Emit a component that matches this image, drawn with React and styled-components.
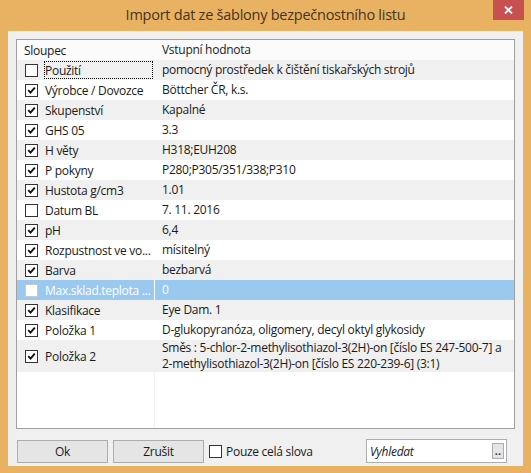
import React from "react";
import styled, { createGlobalStyle } from "styled-components";

const GlobalStyle = createGlobalStyle`
  html, body {
    margin: 0;
    padding: 0;
    background: #e9b263;
  }
  body {
    font-family: "Open Sans", "Noto Sans", sans-serif;
  }
`;

const rows = [
  { label: "Použití", value: "pomocný prostředek k čištění tiskařských strojů", checked: false, focus: true },
  { label: "Výrobce / Dovozce", value: "Böttcher ČR, k.s.", checked: true },
  { label: "Skupenství", value: "Kapalné", checked: true },
  { label: "GHS 05", value: "3.3", checked: true },
  { label: "H věty", value: "H318;EUH208", checked: true },
  { label: "P pokyny", value: "P280;P305/351/338;P310", checked: true },
  { label: "Hustota g/cm3", value: "1.01", checked: true },
  { label: "Datum BL", value: "7. 11. 2016", checked: false },
  { label: "pH", value: "6,4", checked: true },
  { label: "Rozpustnost ve vo...", value: "mísitelný", checked: true },
  { label: "Barva", value: "bezbarvá", checked: true },
  { label: "Max.sklad.teplota ...", value: "0", checked: false, selected: true },
  { label: "Klasifikace", value: "Eye Dam. 1", checked: true },
  { label: "Položka 1", value: "D-glukopyranóza, oligomery, decyl oktyl glykosidy", checked: true },
  {
    label: "Položka 2",
    value: [
      "Směs : 5-chlor-2-methylisothiazol-3(2H)-on [číslo ES 247-500-7] a",
      "2-methylisothiazol-3(2H)-on [číslo ES 220-239-6] (3:1)",
    ],
    checked: true,
  },
];

const Window = styled.div`
  width: 531px;
  height: 473px;
  background: #e9b263;
  display: flex;
  flex-direction: column;
  box-sizing: border-box;
`;

const TitleBar = styled.div`
  height: 31px;
  display: grid;
  grid-template-columns: 1fr auto 1fr;
  align-items: start;
`;

const Title = styled.div`
  grid-column: 2;
  padding-top: 5px;
  font-size: 14.5px;
  letter-spacing: -0.25px;
  color: #45331c;
  white-space: nowrap;
`;

const CloseButton = styled.div`
  grid-column: 3;
  justify-self: end;
  margin-right: 7px;
  width: 31px;
  height: 20px;
  background: #c75050;
  display: flex;
  align-items: center;
  justify-content: center;
`;

const Body = styled.div`
  flex: 1;
  margin: 0 8px 7px 8px;
  background: #f0f0f0;
  padding: 8px 8px 3px 8px;
  display: flex;
  flex-direction: column;
  gap: 10px;
  font-size: 12px;
  letter-spacing: -0.28px;
  color: #1a1a1a;
`;

const List = styled.div`
  height: 390px;
  box-sizing: border-box;
  border: 1px solid #a0a0a0;
  background:
    linear-gradient(to right, transparent 137px, #f0f0f0 137px, #f0f0f0 138px, transparent 138px),
    #ffffff;
  overflow: hidden;
`;

const Row = styled.div`
  display: grid;
  grid-template-columns: 138px 1fr;
  min-height: 20px;
  background: ${(p) => (p.$selected ? "#99c9ef" : p.$striped ? "#f0f0f0" : "#ffffff")};
  color: ${(p) => (p.$selected ? "#ffffff" : "#1a1a1a")};
`;

const HeaderRow = styled(Row)`
  background: #fbfbfb;
`;

const NameCell = styled.div`
  display: flex;
  align-items: center;
  gap: 6px;
  padding-left: ${(p) => (p.$header ? "7px" : "8px")};
  box-sizing: border-box;
  border-right: 1px solid ${(p) => (p.$selected ? "#ffffff" : "transparent")};
  white-space: nowrap;
  overflow: hidden;
`;

const NameText = styled.span`
  flex: 1;
  align-self: stretch;
  display: flex;
  align-items: center;
  padding-left: 1px;
  margin: 1px 1px 1px 0;
  outline: ${(p) => (p.$focus ? "1px dotted #000" : "none")};
  outline-offset: -1px;
`;

const ValueCell = styled.div`
  display: flex;
  flex-direction: column;
  justify-content: center;
  padding-left: 7px;
  line-height: ${(p) => (p.$multi ? "16px" : "20px")};
  min-height: ${(p) => (p.$multi ? "32px" : "20px")};
  white-space: nowrap;
`;

const Box = styled.span`
  width: 13px;
  height: 13px;
  flex: none;
  box-sizing: border-box;
  border: 1px solid ${(p) => (p.$light ? "#c9c9c9" : "#333333")};
  background: #ffffff;
  display: inline-flex;
  align-items: center;
  justify-content: center;
`;

const Footer = styled.div`
  display: flex;
  align-items: center;
  height: 24px;
  padding-left: 1px;
`;

const Button = styled.button`
  width: 91px;
  height: 23px;
  margin-right: 5px;
  border: 1px solid #acacac;
  background: #e5e5e5;
  font-family: inherit;
  font-size: 12px;
  letter-spacing: inherit;
  color: #1a1a1a;
  padding: 0;
`;

const CheckLabel = styled.label`
  display: flex;
  align-items: center;
  gap: 4px;
`;

const Search = styled.div`
  margin-left: auto;
  margin-right: 8px;
  width: 141px;
  height: 24px;
  box-sizing: border-box;
  border: 1px solid #abadb3;
  background: #ffffff;
  display: flex;
  align-items: center;
  padding: 0 2px 0 3px;
`;

const SearchText = styled.span`
  flex: 1;
  font-style: italic;
`;

const DotsButton = styled.span`
  width: 12px;
  height: 16px;
  box-sizing: border-box;
  border: 1px solid #acacac;
  background: #e5e5e5;
  font-size: 11px;
  font-weight: bold;
  line-height: 14px;
  letter-spacing: 0;
  text-align: center;
  color: #333;
`;

const Check = ({ checked, light }) => (
  <Box $light={light}>
    {checked && (
      <svg width="9" height="9" viewBox="0 0 9 9">
        <polyline points="1.2,4.2 3.5,6.6 7.8,1.6" fill="none" stroke="#111" strokeWidth="1.9" />
      </svg>
    )}
  </Box>
);

export default function App() {
  return (
    <>
      <GlobalStyle />
      <Window>
        <TitleBar>
          <Title>Import dat ze šablony bezpečnostního listu</Title>
          <CloseButton>
            <svg width="9" height="8" viewBox="0 0 9 8">
              <path d="M1 0.5 L8 7.5 M8 0.5 L1 7.5" stroke="#fff" strokeWidth="1.8" />
            </svg>
          </CloseButton>
        </TitleBar>
        <Body>
          <List>
            <HeaderRow>
              <NameCell $header>Sloupec</NameCell>
              <ValueCell>Vstupní hodnota</ValueCell>
            </HeaderRow>
            {rows.map((r, i) => {
              const multi = Array.isArray(r.value);
              return (
                <Row key={r.label} $striped={i % 2 === 0} $selected={r.selected}>
                  <NameCell $selected={r.selected}>
                    <Check checked={r.checked} light={r.selected} />
                    <NameText $focus={r.focus}>{r.label}</NameText>
                  </NameCell>
                  <ValueCell $multi={multi}>
                    {multi ? r.value.map((line) => <span key={line}>{line}</span>) : r.value}
                  </ValueCell>
                </Row>
              );
            })}
          </List>
          <Footer>
            <Button>Ok</Button>
            <Button>Zrušit</Button>
            <CheckLabel>
              <Check checked={false} />
              Pouze celá slova
            </CheckLabel>
            <Search>
              <SearchText>Vyhledat</SearchText>
              <DotsButton>..</DotsButton>
            </Search>
          </Footer>
        </Body>
      </Window>
    </>
  );
}
